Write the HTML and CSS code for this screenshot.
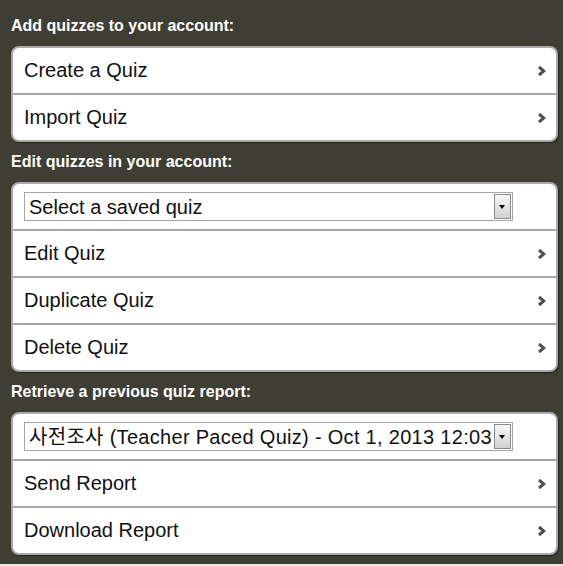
FILE: index.html
```html
<!DOCTYPE html>
<html lang="en">
<head>
  <meta charset="UTF-8">
  <title>Quizzes</title>
  <link rel="stylesheet" href="styles.css">
</head>
<body>

  <div class="page">

    <h2 class="heading first">Add quizzes to your account:</h2>
    <ul class="list">
      <li class="row"><span>Create a Quiz</span><svg class="chev" width="9" height="12" viewBox="0 0 9 12"><path d="M2 2 L6.8 6 L2 10"/></svg></li>
      <li class="row"><span>Import Quiz</span><svg class="chev" width="9" height="12" viewBox="0 0 9 12"><path d="M2 2 L6.8 6 L2 10"/></svg></li>
    </ul>

    <h2 class="heading">Edit quizzes in your account:</h2>
    <ul class="list">
      <li class="row select-row">
        <div class="select">
          <select>
            <option>Select a saved quiz</option>
          </select>
          <span class="arrow"></span>
        </div>
      </li>
      <li class="row"><span>Edit Quiz</span><svg class="chev" width="9" height="12" viewBox="0 0 9 12"><path d="M2 2 L6.8 6 L2 10"/></svg></li>
      <li class="row"><span>Duplicate Quiz</span><svg class="chev" width="9" height="12" viewBox="0 0 9 12"><path d="M2 2 L6.8 6 L2 10"/></svg></li>
      <li class="row"><span>Delete Quiz</span><svg class="chev" width="9" height="12" viewBox="0 0 9 12"><path d="M2 2 L6.8 6 L2 10"/></svg></li>
    </ul>

    <h2 class="heading">Retrieve a previous quiz report:</h2>
    <ul class="list">
      <li class="row select-row">
        <div class="select">
          <select class="wide">
            <option>사전조사 (Teacher Paced Quiz) - Oct 1, 2013 12:03:45 PM</option>
          </select>
          <span class="arrow"></span>
        </div>
      </li>
      <li class="row"><span>Send Report</span><svg class="chev" width="9" height="12" viewBox="0 0 9 12"><path d="M2 2 L6.8 6 L2 10"/></svg></li>
      <li class="row"><span>Download Report</span><svg class="chev" width="9" height="12" viewBox="0 0 9 12"><path d="M2 2 L6.8 6 L2 10"/></svg></li>
    </ul>

  </div>

</body>
</html>
```

FILE: styles.css
```css
html, body {
  margin: 0;
  background-color: #e8e8e8;
}

.page {
  box-sizing: border-box;
  height: 564px;
  padding: 0 5px 0 11px;
  background-color: #3e3e34;
  font-family: "Liberation Sans", Arial, "Noto Sans CJK KR", sans-serif;
}

.heading {
  margin: 0;
  padding: 10px 0;
  font-size: 16px;
  line-height: 20px;
  font-weight: bold;
  color: #fff;
}

.heading.first {
  padding-top: 16px;
}

.list {
  list-style: none;
  margin: 0;
  padding: 0;
  background-color: #fff;
  border: 2px solid #a9a9a9;
  border-radius: 8px;
  box-shadow: 1px 1px 1px rgba(0, 0, 0, 0.45);
  overflow: hidden;
}

.row {
  display: flex;
  align-items: center;
  justify-content: space-between;
  height: 45px;
  padding: 0 10px 0 11px;
  font-size: 20px;
  color: #111;
}

.row + .row {
  border-top: 2px solid #a6a6a6;
}

.chev {
  fill: none;
  stroke: #505050;
  stroke-width: 3;
}

.select {
  display: flex;
  align-items: stretch;
  box-sizing: border-box;
  width: 489px;
  height: 29px;
  border: 1px solid #a5a5a5;
  background-color: #fff;
}

.select select {
  flex: 1;
  min-width: 0;
  appearance: none;
  -webkit-appearance: none;
  border: 0;
  outline: none;
  margin: 0;
  padding: 0 0 0 4px;
  background: transparent;
  font-family: "Liberation Sans", Arial, "Noto Sans CJK KR", sans-serif;
  font-size: 20px;
  color: #111;
}

.select select.wide {
  letter-spacing: 0.3px;
}

.arrow {
  position: relative;
  width: 15px;
  margin: 1px;
  border: 1px solid #8a8a8a;
  background: linear-gradient(#f6f6f6, #d2d2d2);
}

.arrow::after {
  content: "";
  position: absolute;
  left: 4px;
  top: 10px;
  border-left: 3.5px solid transparent;
  border-right: 3.5px solid transparent;
  border-top: 4px solid #000;
}
```
